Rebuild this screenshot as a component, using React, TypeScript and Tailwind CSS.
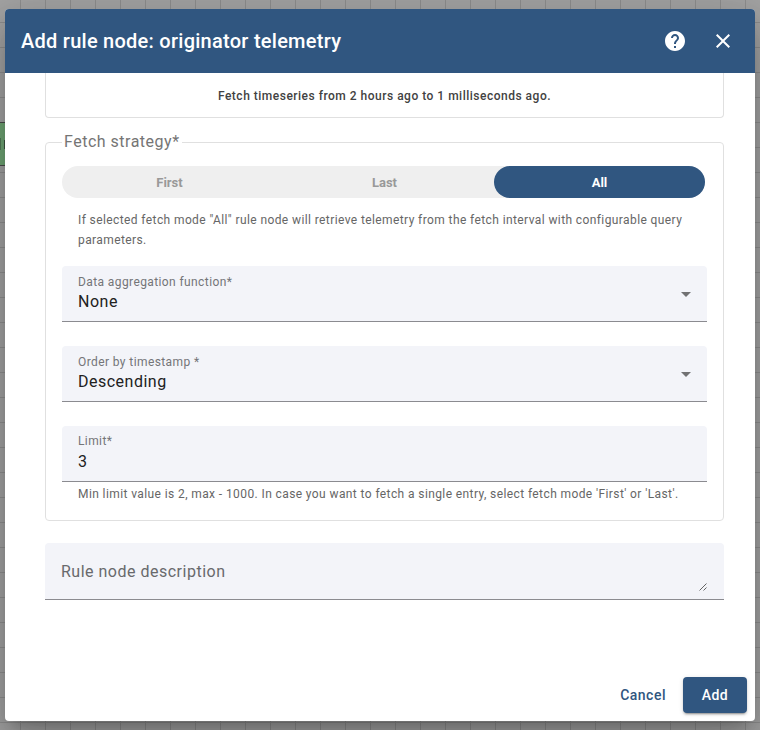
import type { ReactNode } from "react";

const canvasGrid =
  "bg-[#a3a3a3] bg-[linear-gradient(to_right,#8e8e8e_1px,transparent_1px),linear-gradient(to_bottom,#8e8e8e_1px,transparent_1px)] bg-[length:25px_25px] bg-[position:20px_22px]";

function HelpIcon() {
  return (
    <svg className="size-6" viewBox="0 0 24 24" fill="currentColor">
      <path d="M12 2C6.48 2 2 6.48 2 12s4.48 10 10 10 10-4.48 10-10S17.52 2 12 2zm1 17h-2v-2h2v2zm2.07-7.75l-.9.92C13.45 12.9 13 13.5 13 15h-2v-.5c0-1.1.45-2.1 1.17-2.83l1.24-1.26c.37-.36.59-.86.59-1.41 0-1.1-.9-2-2-2s-2 .9-2 2H8c0-2.21 1.79-4 4-4s4 1.79 4 4c0 .88-.36 1.68-.93 2.25z" />
    </svg>
  );
}

function CloseIcon() {
  return (
    <svg className="size-6" viewBox="0 0 24 24" fill="currentColor">
      <path d="M19 6.41L17.59 5 12 10.59 6.41 5 5 6.41 10.59 12 5 17.59 6.41 19 12 13.41 17.59 19 19 17.59 13.41 12z" />
    </svg>
  );
}

function Field({ label, value, select }: { label: string; value: string; select?: boolean }) {
  return (
    <div className="flex h-14 items-center justify-between rounded-t border-b border-[#8b8b90] bg-[#f3f4f9] px-4">
      <div className="flex flex-col pb-[3px]">
        <span
          className={`h-5 text-xs tracking-[0.4px] text-[#747578] ${select ? "leading-5" : "leading-[18px]"}`}
        >
          {label}
        </span>
        <span className="h-5 text-base leading-5 tracking-[0.5px] text-[#212121]">{value}</span>
      </div>
      {select && (
        <svg className="mt-0.5 h-[5px] w-[10px] text-[#717173]" viewBox="0 0 10 5" fill="currentColor">
          <path d="M0 0h10L5 5z" />
        </svg>
      )}
    </div>
  );
}

function Hint({ children }: { children: ReactNode }) {
  return <p className="px-4 text-xs leading-5 tracking-[0.4px] text-[#666]">{children}</p>;
}

export default function App() {
  return (
    <div className={`relative h-[730px] w-[760px] overflow-hidden font-[Roboto,sans-serif] ${canvasGrid}`}>
      <div className="absolute top-[122px] -left-4 flex h-11 w-10 items-center border border-[#4a4a4a] bg-[#6fa574] pl-[15px]">
        <span className="h-3 w-px bg-[#537c57]" />
        <span className="ml-[3px] h-[9px] w-px bg-[#3b533e]" />
      </div>

      <div className="absolute top-[9px] left-[5px] flex h-[712px] w-[750px] flex-col overflow-hidden rounded bg-white shadow-[0_11px_15px_-7px_rgba(0,0,0,0.2),0_24px_38px_3px_rgba(0,0,0,0.14),0_9px_46px_8px_rgba(0,0,0,0.12)]">
        <header className="flex h-16 shrink-0 items-center bg-[#305680] pr-5 pl-4 text-white">
          <h1 className="flex-1 text-xl font-medium tracking-[0.26px]">Add rule node: originator telemetry</h1>
          <button className="mr-6">
            <HelpIcon />
          </button>
          <button>
            <CloseIcon />
          </button>
        </header>

        <main className="flex flex-1 flex-col pr-[31px] pl-10">
          <div className="flex h-[45px] items-center justify-center rounded-b border-x border-b border-[#e0e0e0] pt-0.5 text-xs font-medium tracking-[0.5px] text-[#424242]">
            Fetch timeseries from 2 hours ago to 1 milliseconds ago.
          </div>

          <section className="mt-6 flex h-[379px] flex-col rounded border border-[#e0e0e0] px-4">
            <h2 className="-mt-[13px] h-6 w-[120px] bg-white px-0.5 text-base leading-6 tracking-[0.5px] whitespace-nowrap text-[#757575]">
              Fetch strategy*
            </h2>
            <div className="mt-3 mr-0.5 grid h-8 shrink-0 grid-cols-[215px_215px_1fr] rounded-full bg-[#efefef] text-center text-[13px] leading-[33px] font-bold text-[#999]">
              <span>First</span>
              <span>Last</span>
              <span className="ml-0.5 h-8 rounded-full bg-[#305680] text-white">All</span>
            </div>
            <div className="mt-3">
              <Hint>
                If selected fetch mode "All" rule node will retrieve telemetry from the fetch interval with configurable
                query parameters.
              </Hint>
            </div>
            <div className="mt-4 flex flex-col gap-6">
              <Field label="Data aggregation function*" value="None" select />
              <Field label="Order by timestamp *" value="Descending" select />
              <Field label="Limit*" value="3" />
            </div>
            <div className="mt-0.5">
              <Hint>Min limit value is 2, max - 1000. In case you want to fetch a single entry, select fetch mode 'First' or 'Last'.</Hint>
            </div>
          </section>

          <div className="mt-[22px] flex h-[57px] items-center justify-between rounded-t border-b border-[#8b8b90] bg-[#f3f4f9] px-4">
            <span className="pt-px text-base tracking-[0.5px] text-[#68696c]">Rule node description</span>
            <svg className="mt-8 mr-px size-2" viewBox="0 0 8 8" stroke="#555" strokeWidth="0.9">
              <path d="M0.5 7.5L7.5 0.5M4.5 7.5L7.5 4.5" />
            </svg>
          </div>
        </main>

        <footer className="flex h-11 shrink-0 items-start justify-end gap-[17px] pr-2 text-sm leading-9 font-medium">
          <button className="tracking-[0.5px] text-[#305680]">Cancel</button>
          <button className="h-9 w-16 rounded bg-[#305680] tracking-[0.4px] text-white shadow-[0_3px_1px_-2px_rgba(0,0,0,0.2),0_2px_2px_rgba(0,0,0,0.14),0_1px_5px_rgba(0,0,0,0.12)]">
            Add
          </button>
        </footer>
      </div>
    </div>
  );
}
